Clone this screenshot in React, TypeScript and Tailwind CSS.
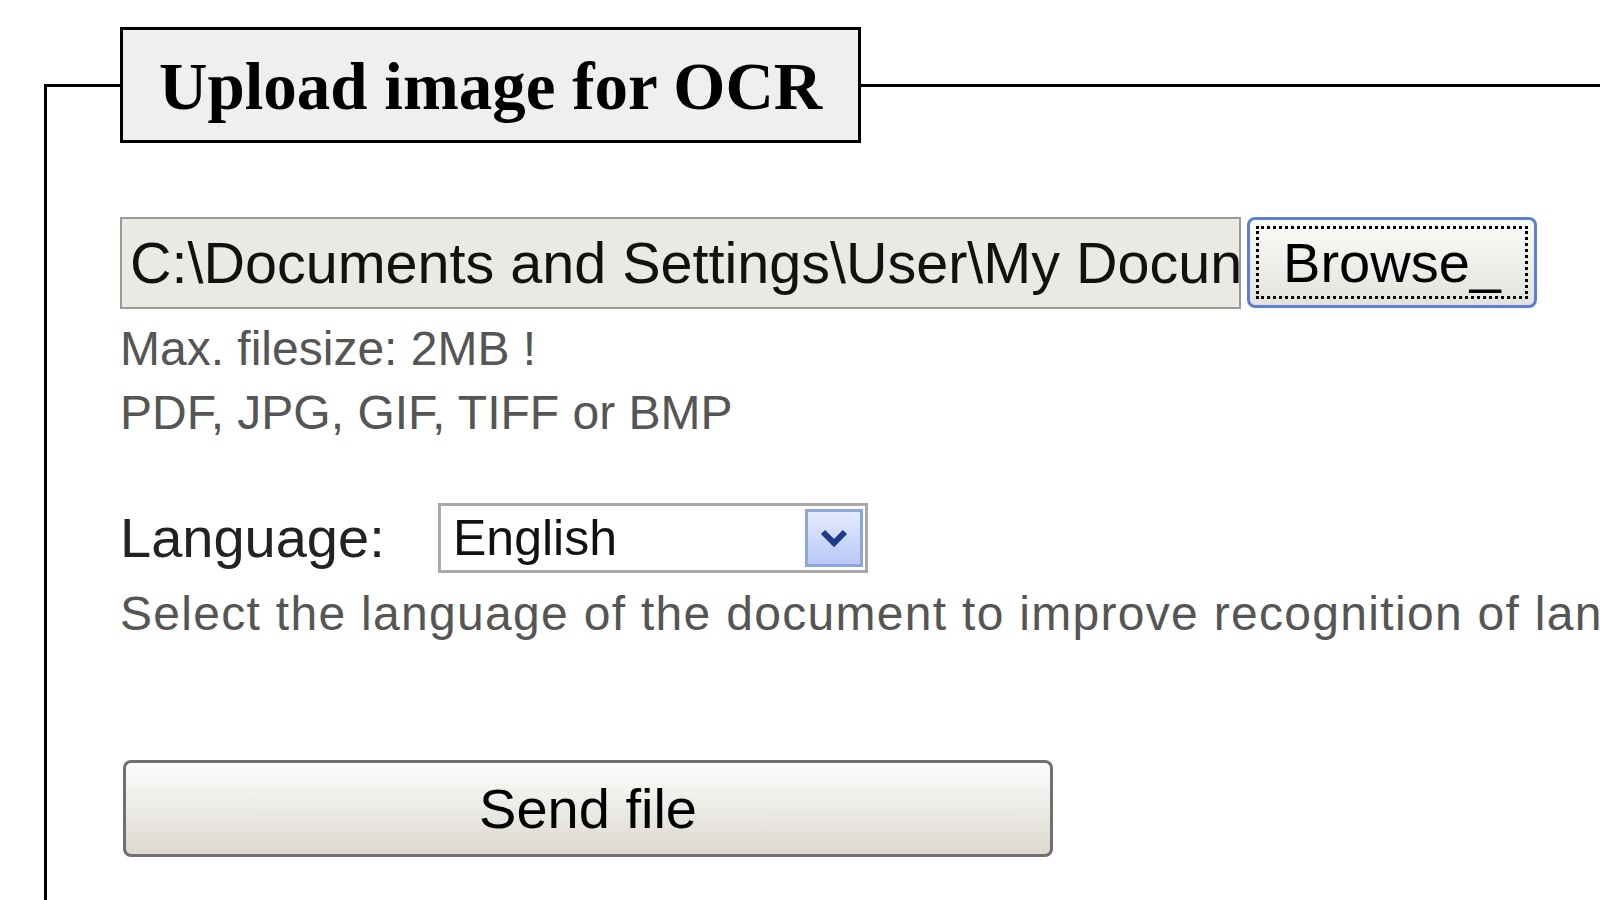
import React from "react";

export default function App() {
  return (
    <div className="w-[1600px] h-[900px] overflow-hidden bg-white" style={{ fontFamily: '"Liberation Sans", Arial, sans-serif' }}>
      <fieldset className="ml-[44px] mt-[27px] w-[1700px] h-[1000px] border-[3px] border-black pl-[73px] pr-0 pb-0 m-0 min-w-0">
        <legend className="border-[3px] border-black bg-[#efefef] h-[116px] px-[36px] flex items-center text-[67px] font-bold text-black leading-none" style={{ fontFamily: '"Liberation Serif", "Times New Roman", serif' }}>
          <span className="mt-[2px]">Upload image for OCR</span>
        </legend>

        <div className="mt-[74px] flex items-start gap-[6px]">
          <div className="w-[1121px] h-[92px] bg-[#ebe9e4] border-2 border-[#9c9a94] pl-[8px] overflow-hidden">
            <span className="block w-[1109px] overflow-hidden whitespace-nowrap text-[57.5px] leading-[88px] text-[#111]">
              C:\Documents and Settings\User\My Docun
            </span>
          </div>
          <button className="w-[290px] h-[91px] rounded-[8px] border-[3px] border-[#5b7fd6] bg-gradient-to-b from-[#fbfbf9] to-[#e4e2dc] p-[6px] flex">
            <span className="flex-1 flex items-center justify-center border-[3px] border-dotted border-black text-[56px] text-black leading-none">
              Browse_
            </span>
          </button>
        </div>

        <div className="mt-[8px] text-[48px] leading-[64px] text-[#555]">
          <div>Max. filesize: 2MB !</div>
          <div>PDF, JPG, GIF, TIFF or BMP</div>
        </div>

        <div className="mt-[51px] flex items-center">
          <span className="text-[56px] text-[#222] w-[318px]">Language:</span>
          <div className="w-[430px] h-[70px] border-[3px] border-[#a8a8a8] bg-white flex items-center justify-between pl-[12px] pr-[2px]">
            <span className="text-[50px] text-[#111] leading-none">English</span>
            <div className="w-[58px] h-[58px] border-[3px] border-[#8ea4dc] bg-gradient-to-b from-[#e4ebfd] to-[#b9c9f5] flex items-center justify-center">
              <svg width="30" height="22" viewBox="0 0 30 22">
                <path d="M4 5 L15 16 L26 5" fill="none" stroke="#1f3a8a" strokeWidth="6" />
              </svg>
            </div>
          </div>
        </div>

        <div className="mt-[2px] w-[1480px] overflow-hidden text-[48px] tracking-[1.3px] leading-[64px] text-[#555] whitespace-nowrap">
          Select the language of the document to improve recognition of lan
        </div>

        <button className="mt-[114px] ml-[3px] w-[930px] h-[97px] rounded-[8px] border-[3px] border-[#707070] bg-gradient-to-b from-[#fdfdfc] to-[#dcd8d0] text-[56px] text-black flex items-center justify-center">
          Send file
        </button>
      </fieldset>
    </div>
  );
}
